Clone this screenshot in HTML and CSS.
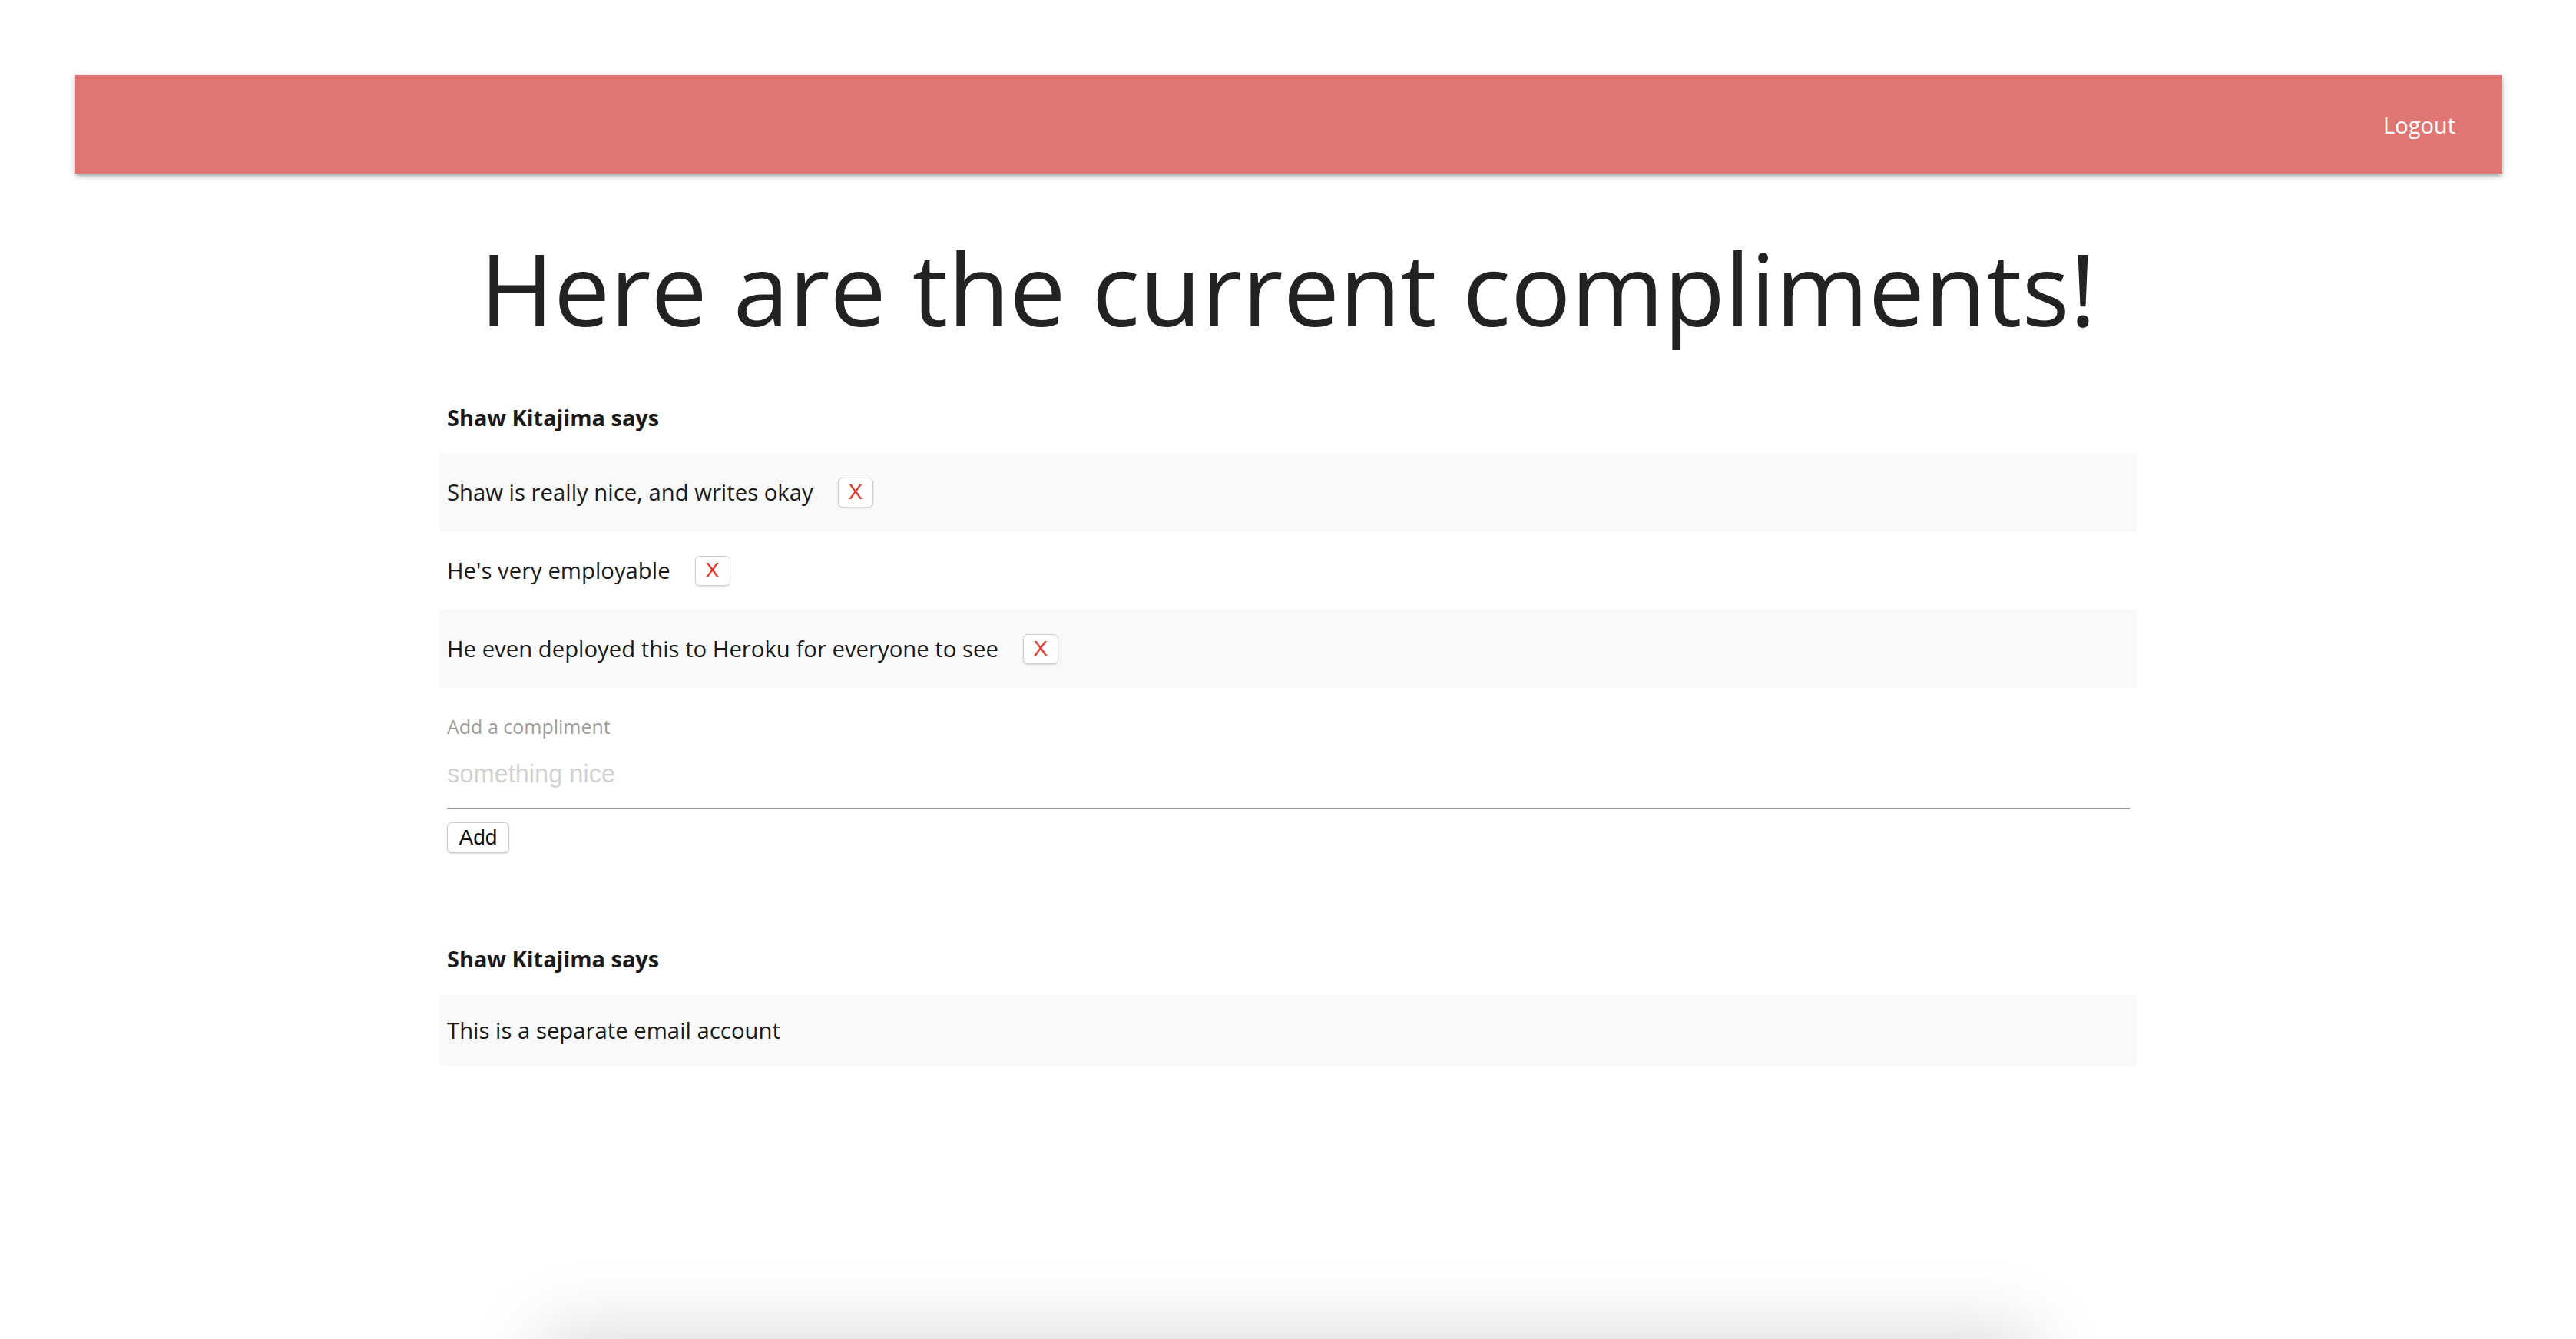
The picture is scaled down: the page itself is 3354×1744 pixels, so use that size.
FILE: index.html
```html
<!DOCTYPE html>
<html lang="en">
<head>
<meta charset="utf-8">
<title>Compliments</title>
<link rel="stylesheet" href="styles.css">
</head>
<body>
<nav class="navbar">
  <a class="nav-link" href="#">Logout</a>
</nav>
<main class="container">
  <h1 class="title">Here are the current compliments!</h1>

  <section class="group">
    <h2 class="group-title">Shaw Kitajima says</h2>
    <div class="list">
      <div class="row"><span class="row-text">Shaw is really nice, and writes okay</span><button class="del">X</button></div>
      <div class="row"><span class="row-text">He's very employable</span><button class="del">X</button></div>
      <div class="row"><span class="row-text">He even deployed this to Heroku for everyone to see</span><button class="del">X</button></div>
    </div>
    <form class="add-form">
      <label class="field-label" for="c1">Add a compliment</label>
      <input class="field-input" id="c1" type="text" placeholder="something nice">
      <button class="add-btn" type="button">Add</button>
    </form>
  </section>

  <section class="group group-second">
    <h2 class="group-title">Shaw Kitajima says</h2>
    <div class="list">
      <div class="row row-plain"><span class="row-text">This is a separate email account</span></div>
    </div>
  </section>

  <div class="card-below"></div>
</main>
</body>
</html>
```

FILE: styles.css
```css
html, body {
  margin: 0;
  padding: 0;
  background: #ffffff;
}

body {
  font-family: "Open Sans", "DejaVu Sans", sans-serif;
  color: #212121;
}

.navbar {
  margin: 98px 96px 0 98px;
  height: 128px;
  background: #df7674;
  display: flex;
  justify-content: flex-end;
  align-items: center;
  padding-right: 61px;
  box-shadow: 0 4px 4px 0 rgba(0,0,0,0.14), 0 6px 2px -4px rgba(0,0,0,0.12), 0 2px 10px 0 rgba(0,0,0,0.2);
}

.nav-link {
  color: #ffffff;
  text-decoration: none;
  font-size: 29px;
  line-height: 1;
}

.container {
  width: 2210px;
  margin: 0 auto;
}

.title {
  margin: 71px 0 0 0;
  font-size: 130.5px;
  line-height: 1.2;
  font-weight: 400;
  text-align: center;
  color: #222222;
}

.group {
  margin-top: 73px;
}

.group-second {
  margin-top: 121px;
}

.group-title {
  margin: 0 0 29px 10px;
  font-size: 28.9px;
  line-height: 1.2;
  font-weight: 700;
  color: #1a1a1a;
}

.list {
  display: flex;
  flex-direction: column;
}

.row {
  height: 102px;
  padding: 0 10px;
  display: flex;
  align-items: center;
  font-size: 29.3px;
  color: #1a1a1a;
}

.row:nth-child(odd) {
  background: #f9f9f9;
}

.row-plain {
  height: 93px;
}

.del {
  margin-left: 32px;
  width: 46px;
  height: 39px;
  padding: 0;
  border: 1px solid #cfcfcf;
  border-radius: 6px;
  background: #ffffff;
  color: #e5322a;
  font-family: "Liberation Sans", Arial, sans-serif;
  font-size: 28px;
  line-height: 1;
  box-shadow: 0 1px 2px rgba(0,0,0,0.15);
}

.add-form {
  display: flex;
  flex-direction: column;
  align-items: flex-start;
  padding: 0 9px 0 10px;
  margin-top: 35px;
}

.field-label {
  font-size: 25px;
  line-height: 1.2;
  color: #9e9e9e;
}

.field-input {
  align-self: stretch;
  margin: 25px 0 0 0;
  height: 44px;
  padding: 0 0 22px 0;
  border: none;
  border-bottom: 2px solid #9e9e9e;
  outline: none;
  background: transparent;
  font-family: "Liberation Sans", Arial, sans-serif;
  font-size: 32.6px;
  color: #212121;
}

.field-input::placeholder {
  color: #d2d2d2;
}

.add-btn {
  margin-top: 17px;
  width: 81px;
  height: 40px;
  padding: 0;
  border: 1px solid #cbcbcb;
  border-radius: 6px;
  background: #ffffff;
  color: #111111;
  font-family: "Liberation Sans", Arial, sans-serif;
  font-size: 28px;
  line-height: 1;
  box-shadow: 0 1px 2px rgba(0,0,0,0.15);
}

.card-below {
  width: 1900px;
  height: 300px;
  margin: 368px auto 0 auto;
  box-shadow: 0 0 90px 22px rgba(0,0,0,0.15);
}
```
